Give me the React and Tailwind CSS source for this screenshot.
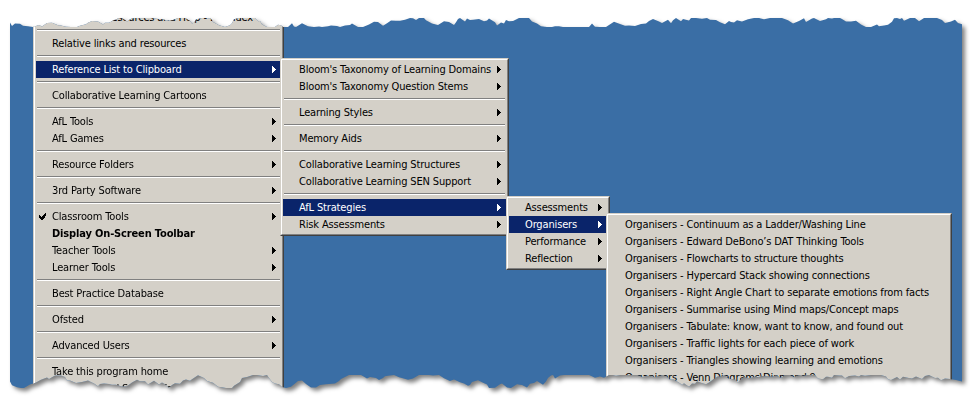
import React from 'react'
import clsx from 'clsx'

// small seeded random so the torn edge is the same every run
function rng(seed) {
  let s = seed
  return () => {
    s = (s * 16807) % 2147483647
    return (s - 1) / 2147483646
  }
}

function tornEdge(width, lo, hi, seed) {
  const r = rng(seed)
  const pts = []
  let x = 0
  let y = (lo + hi) / 2
  while (x < width) {
    pts.push([x, y])
    x += 2 + Math.floor(r() * 5)
    y += (r() - 0.5) * 8
    y = Math.max(lo, Math.min(hi, y))
  }
  pts.push([width, y])
  return pts
}

const W = 952
const H = 373

function clipPath() {
  const top = tornEdge(W, 2, 11, 7)
  const bottom = tornEdge(W, 359, 372, 91).reverse()
  return `polygon(${[...top, ...bottom].map(([x, y]) => `${x}px ${y.toFixed(1)}px`).join(',')})`
}

function Arrow({ white }) {
  return (
    <svg width="4" height="7" viewBox="0 0 4 7" shapeRendering="crispEdges" className="mr-[5px] shrink-0">
      <path d="M0 0h1v7h-1z M1 1h1v5h-1z M2 2h1v3h-1z M3 3h1v1h-1z" fill={white ? '#fff' : '#000'} />
    </svg>
  )
}

function Check() {
  return (
    <svg width="7" height="7" viewBox="0 0 7 7" shapeRendering="crispEdges">
      <path d="M6 0h1v3h-1z M5 1h1v4h-1z M4 2h1v4h-1z M3 3h1v4h-1z M2 4h1v3h-1z M1 3h1v3h-1z M0 2h1v3h-1z" fill="#000" />
    </svg>
  )
}

function Item({ label, arrow, active, bold, check }) {
  return (
    <div
      className={clsx(
        'flex h-[17px] items-center whitespace-nowrap leading-[17px]',
        active ? 'bg-[#0a246a] text-white' : 'text-black',
        bold && 'font-bold'
      )}
    >
      <div className="flex w-[16px] shrink-0 items-center pl-[3px]">{check && <Check />}</div>
      <span className="flex-1">{label}</span>
      {arrow && <Arrow white={active} />}
    </div>
  )
}

function Sep() {
  return (
    <div className="h-[9px] px-px pt-[3px]">
      <div className="border-t border-b border-t-[#808080] border-b-white" />
    </div>
  )
}

function Menu({ items, className }) {
  return (
    <div className={clsx('absolute border border-t-[#d4d0c8] border-l-[#d4d0c8] border-r-[#404040] border-b-[#404040] bg-[#d4d0c8]', className)}>
      <div className="border border-t-white border-l-white border-r-[#808080] border-b-[#808080] p-px">
        {items.map((it, i) => (it === '-' ? <Sep key={i} /> : <Item key={i} {...it} />))}
      </div>
    </div>
  )
}

const mainItems = [
  { label: 'Classroom Resources and Help - DS Index' },
  '-',
  { label: 'Relative links and resources' },
  '-',
  { label: 'Reference List to Clipboard', arrow: true, active: true },
  '-',
  { label: 'Collaborative Learning Cartoons' },
  '-',
  { label: 'AfL Tools', arrow: true },
  { label: 'AfL Games', arrow: true },
  '-',
  { label: 'Resource Folders', arrow: true },
  '-',
  { label: '3rd Party Software', arrow: true },
  '-',
  { label: 'Classroom Tools', arrow: true, check: true },
  { label: 'Display On-Screen Toolbar', bold: true },
  { label: 'Teacher Tools', arrow: true },
  { label: 'Learner Tools', arrow: true },
  '-',
  { label: 'Best Practice Database' },
  '-',
  { label: 'Ofsted', arrow: true },
  '-',
  { label: 'Advanced Users', arrow: true },
  '-',
  { label: 'Take this program home' },
  { label: 'Feedback and Support for users' },
]

const refItems = [
  { label: "Bloom's Taxonomy of Learning Domains", arrow: true },
  { label: "Bloom's Taxonomy Question Stems", arrow: true },
  '-',
  { label: 'Learning Styles', arrow: true },
  '-',
  { label: 'Memory Aids', arrow: true },
  '-',
  { label: 'Collaborative Learning Structures', arrow: true },
  { label: 'Collaborative Learning SEN Support', arrow: true },
  '-',
  { label: 'AfL Strategies', arrow: true, active: true },
  { label: 'Risk Assessments', arrow: true },
]

const aflItems = [
  { label: 'Assessments', arrow: true },
  { label: 'Organisers', arrow: true, active: true },
  { label: 'Performance', arrow: true },
  { label: 'Reflection', arrow: true },
]

const orgItems = [
  'Continuum as a Ladder/Washing Line',
  'Edward DeBono’s DAT Thinking Tools',
  'Flowcharts to structure thoughts',
  'Hypercard Stack showing connections',
  'Right Angle Chart to separate emotions from facts',
  'Summarise using Mind maps/Concept maps',
  'Tabulate: know, want to know, and found out',
  'Traffic lights for each piece of work',
  'Triangles showing learning and emotions',
  'Venn Diagrams\\Diamond 9',
  'Word Walls',
].map((t) => ({ label: 'Organisers - ' + t }))

export default function App() {
  return (
    <div className="h-[403px] w-[973px] overflow-hidden bg-white pl-[10px] pt-[16px] font-['DejaVu_Sans_Condensed','Liberation_Sans',sans-serif] text-[11px] tracking-[-0.15px]">
      <div className="w-[952px] drop-shadow-[3px_3px_2px_rgba(0,0,0,0.5)]">
        <div className="relative h-[373px] w-[952px] overflow-hidden bg-[#3a6ea5]" style={{ clipPath: clipPath() }}>
          <Menu items={mainItems} className="left-[23px] top-[-10px] w-[251px]" />
          <Menu items={refItems} className="left-[270px] top-[42px] w-[229px]" />
          <Menu items={aflItems} className="left-[496px] top-[180px] w-[104px]" />
          <Menu items={orgItems} className="left-[596px] top-[197px] w-[346px]" />
        </div>
      </div>
    </div>
  )
}
